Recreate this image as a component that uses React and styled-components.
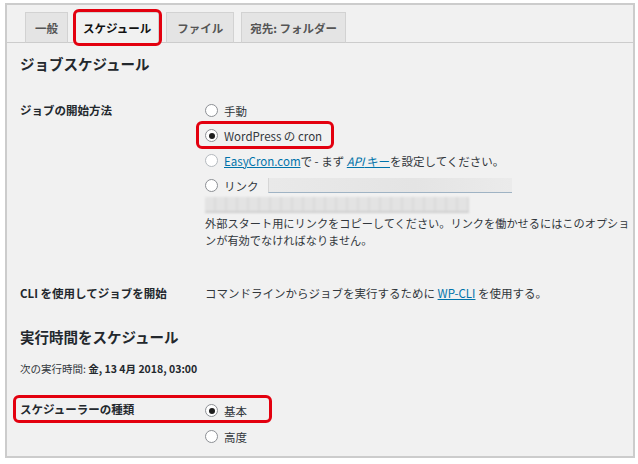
import styled, { createGlobalStyle, css } from 'styled-components';

const GlobalStyle = createGlobalStyle`
  html, body {
    margin: 0;
    padding: 0;
    background: #ffffff;
  }
  body {
    font-family: "Noto Sans CJK JP", "Noto Sans", sans-serif;
    color: #23282d;
  }
`;

const Frame = styled.div`
  position: relative;
  box-sizing: border-box;
  width: 630px;
  height: 455px;
  margin: 3px 0 0 5px;
  border: 2px solid #cccccc;
  background: #f1f1f1;
  overflow: hidden;
`;

const TabBar = styled.div`
  display: flex;
  gap: 7px;
  padding: 7px 0 0 18px;
  border-bottom: 1px solid #cccccc;
  height: 30px;
`;

const Tab = styled.div`
  position: relative;
  box-sizing: border-box;
  height: 31px;
  display: flex;
  align-items: center;
  padding: 0 ${({ $pad }) => $pad}px;
  font-size: 11.5px;
  font-weight: 600;
  color: #555555;
  background: #e4e4e4;
  border: 1px solid #d2d2d2;
  border-bottom-color: #cccccc;

  ${({ $active }) =>
    $active &&
    css`
      color: #111111;
      font-weight: 700;
      background: #f1f1f1;
      border-bottom-color: #f1f1f1;

      &::after {
        content: '';
        position: absolute;
        top: -4px;
        left: -3px;
        right: -4px;
        bottom: -4px;
        border: 3px solid #e3000f;
        border-radius: 6px;
      }
    `}
`;

const Content = styled.div`
  padding: 0 0 0 13px;
`;

const Heading = styled.h2`
  margin: ${({ $top }) => $top}px 0 0;
  font-size: 14.5px;
  line-height: 20px;
  font-weight: 700;
  color: #23282d;
`;

const Row = styled.div`
  position: relative;
  display: grid;
  grid-template-columns: 185px 1fr;
  margin-top: ${({ $top }) => $top}px;
`;

const Label = styled.div`
  font-size: 11.5px;
  font-weight: 700;
  line-height: 25px;
  color: #23282d;
  white-space: nowrap;
`;

const Options = styled.div`
  display: flex;
  flex-direction: column;
  align-items: flex-start;
`;

const Option = styled.label`
  position: relative;
  display: inline-flex;
  align-items: center;
  height: ${({ $h }) => $h || 25}px;
  font-size: 11.5px;
  color: #32373c;
  white-space: nowrap;

  ${({ $mark }) =>
    $mark &&
    css`
      &::after {
        content: '';
        position: absolute;
        top: -2px;
        left: -9px;
        right: -12px;
        bottom: -1px;
        border: 3px solid #e3000f;
        border-radius: 6px;
      }
    `}
`;

const Radio = styled.span`
  box-sizing: border-box;
  display: inline-flex;
  align-items: center;
  justify-content: center;
  width: 13px;
  height: 13px;
  margin-right: 6px;
  border-radius: 50%;
  border: 1px solid ${({ $dim }) => ($dim ? '#b4b9be' : '#8c8f94')};
  background: #ffffff;

  &::before {
    content: '';
    width: 6px;
    height: 6px;
    border-radius: 50%;
    background: ${({ $checked }) => ($checked ? '#1e1e1e' : 'transparent')};
  }
`;

const Link = styled.span`
  color: #0073aa;
  text-decoration: underline;
`;

const UrlInput = styled.div`
  box-sizing: border-box;
  width: 244px;
  height: 15px;
  margin-left: 9px;
  background: linear-gradient(90deg, #e9e9e9, #e4e4e4 60%, #ebebeb);
  border-left: 1px solid #d6d6d6;
  border-bottom: 1px solid #9fb3c4;
  filter: blur(0.4px);
`;

const BlurredUrl = styled.div`
  box-sizing: border-box;
  width: 264px;
  height: 16px;
  margin-top: -1px;
  background: repeating-linear-gradient(90deg, #e3e3e3 0 9px, #dadada 9px 11px);
  border-bottom: 2px solid #cfcfcf;
  filter: blur(0.8px);
`;

const Help = styled.p`
  margin: 2px 0 0;
  font-size: 11.2px;
  line-height: 17px;
  color: #32373c;
  white-space: nowrap;
`;

const Text = styled.div`
  font-size: 11.5px;
  line-height: 25px;
  color: #32373c;
  white-space: nowrap;
`;

const NextRun = styled.p`
  margin: 14px 0 0;
  font-size: 10.5px;
  line-height: 16px;
  color: #32373c;

  b {
    font-weight: 700;
    color: #23282d;
  }
`;

const RowMark = styled.span`
  position: absolute;
  top: -2px;
  left: -7px;
  width: 259px;
  height: 28px;
  box-sizing: border-box;
  border: 3px solid #e3000f;
  border-radius: 6px;
  pointer-events: none;
`;

const tabs = [
  { name: '一般', pad: 9 },
  { name: 'スケジュール', pad: 7, active: true },
  { name: 'ファイル', pad: 10 },
  { name: '宛先: フォルダー', pad: 8 },
];

export default function App() {
  return (
    <>
      <GlobalStyle />
      <Frame>
        <TabBar>
          {tabs.map((t) => (
            <Tab key={t.name} $pad={t.pad} $active={t.active}>
              {t.name}
            </Tab>
          ))}
        </TabBar>
        <Content>
          <Heading $top={11}>ジョブスケジュール</Heading>

          <Row $top={24}>
            <Label>ジョブの開始方法</Label>
            <Options>
              <Option>
                <Radio />
                手動
              </Option>
              <Option $mark>
                <Radio $checked />
                WordPress の cron
              </Option>
              <Option>
                <Radio $dim />
                <Link>EasyCron.com</Link>で - まず&nbsp;
                <Link>
                  <i>API</i> キー
                </Link>
                を設定してください。
              </Option>
              <Option>
                <Radio />
                リンク
                <UrlInput />
              </Option>
              <BlurredUrl />
              <Help>
                {'外部スタート用にリンクをコピーしてください。リンクを働かせるにはこのオプショ'}
                <br />
                {'ンが有効でなければなりません。'}
              </Help>
            </Options>
          </Row>

          <Row $top={32}>
            <Label>CLI を使用してジョブを開始</Label>
            <Text>
              コマンドラインからジョブを実行するために <Link>WP-CLI</Link> を使用する。
            </Text>
          </Row>

          <Heading $top={21}>実行時間をスケジュール</Heading>
          <NextRun>
            次の実行時間: <b>金, 13 4月 2018, 03:00</b>
          </NextRun>

          <Row $top={20}>
            <RowMark />
            <Label>スケジューラーの種類</Label>
            <Options>
              <Option $h={27}>
                <Radio $checked />
                基本
              </Option>
              <Option>
                <Radio />
                高度
              </Option>
            </Options>
          </Row>
        </Content>
      </Frame>
    </>
  );
}
